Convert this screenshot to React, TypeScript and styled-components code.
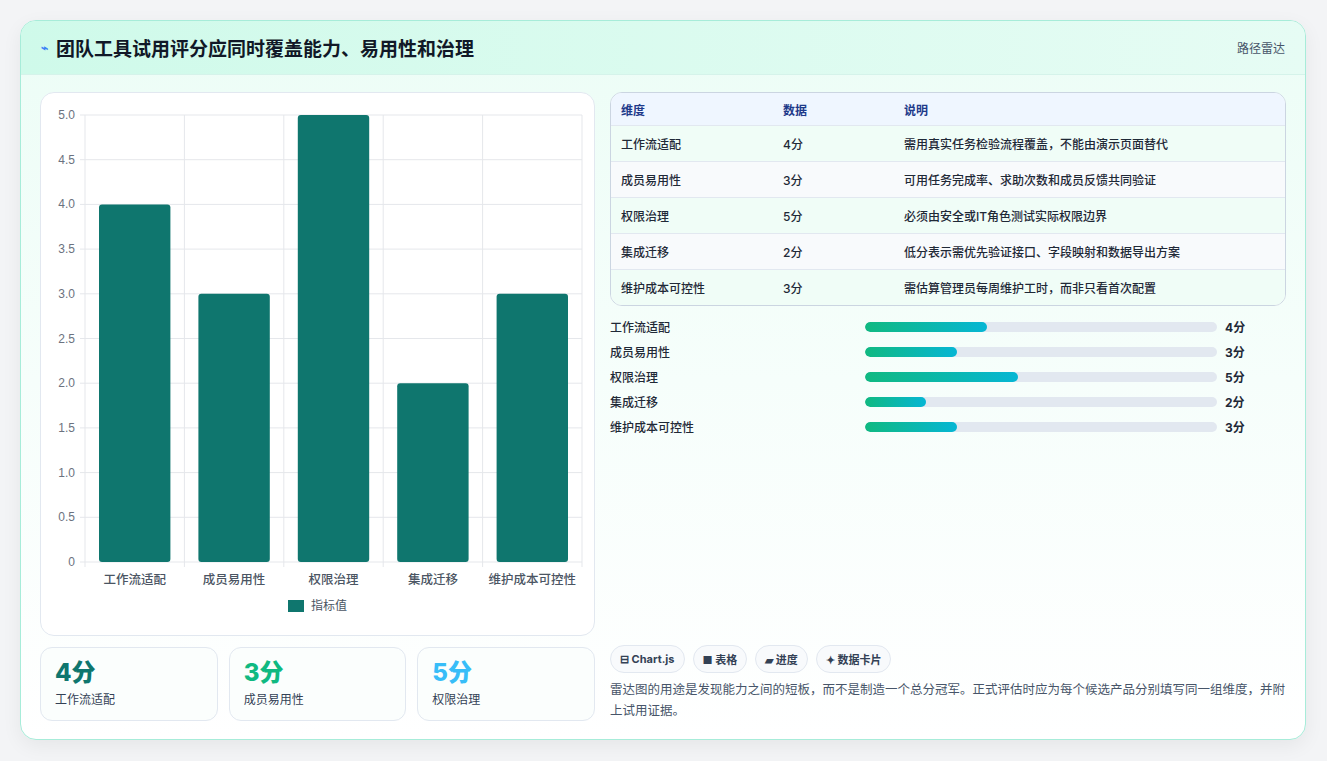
import React from "react";
import styled, { createGlobalStyle } from "styled-components";

const G = createGlobalStyle`
  body { margin:0; background:#f3f4f6; font-family: Inter, "Noto Sans CJK SC", sans-serif; }
`;
const Page = styled.div`padding:20px 21px 21px 20px; height:761px; box-sizing:border-box;`;
const Card = styled.div`
  height:720px; box-sizing:border-box; border:1px solid #a7ecd9; border-radius:16px; overflow:hidden;
  background:linear-gradient(180deg,#ecfdf6 0%,#f6fefb 50%,#ffffff 100%);
  box-shadow:0 6px 20px rgba(0,0,0,0.06); display:flex; flex-direction:column;
`;
const Header = styled.div`
  height:55px; box-sizing:border-box; display:flex; align-items:center; justify-content:space-between;
  padding:0 20px 0 20px; background:linear-gradient(90deg,#cffaea,#e6fcf4); border-bottom:1px solid #d5f3ea;
`;
const Title = styled.h1`margin:0; font-size:19px; font-weight:700; color:#111827; display:flex; align-items:center; gap:8px;`;
const Tag = styled.span`font-size:12px; color:#475569;`;
const Body = styled.div`flex:1; display:grid; grid-template-columns:555px 1fr; gap:15px; padding:17px 19px 18px 19px;`;
const Col = styled.div`display:flex; flex-direction:column; gap:11px; min-height:0;`;
const ChartBox = styled.div`height:544px; box-sizing:border-box; background:#fff; border:1px solid #e2e8f0; border-radius:14px;`;
const Stats = styled.div`display:grid; grid-template-columns:repeat(3,1fr); gap:11px;`;
const Stat = styled.div`height:74px; box-sizing:border-box; border:1px solid #e2e8f0; border-radius:12px; background:#fbfefd; padding:10px 14px;`;
const StatNum = styled.div<{ c: string }>`font-size:24px; font-weight:800; color:${p => p.c}; line-height:30px;`;
const StatLbl = styled.div`font-size:12px; color:#334155; margin-top:2px;`;
const Table = styled.div`border:1px solid #cbd5e1; border-radius:12px; overflow:hidden; background:#fff;`;
const Row = styled.div<{ head?: boolean; alt?: boolean }>`
  display:grid; grid-template-columns:162px 121px 1fr; align-items:center; padding:0 10px;
  height:${p => (p.head ? 32 : 35)}px; font-size:12px; color:${p => (p.head ? "#1e3a8a" : "#1f2937")};
  font-weight:${p => (p.head ? 700 : 500)};
  background:${p => (p.head ? "#eff6ff" : p.alt ? "#f8fafc" : "#f0fdf7")};
  border-top:${p => (p.head ? "none" : "1px solid #e2e8f0")};
`;
const Bars = styled.div`display:flex; flex-direction:column; gap:8px; margin-top:1px;`;
const BarRow = styled.div`display:grid; grid-template-columns:255px 352px 1fr; align-items:center; height:17px; font-size:12px; color:#1f2937; font-weight:500;`;
const Track = styled.div`height:10px; border-radius:5px; background:#e2e8f0; overflow:hidden;`;
const Fill = styled.div`height:100%; border-radius:5px; background:linear-gradient(90deg,#10b981,#06b6d4);`;
const Val = styled.span`padding-left:8px; font-weight:700;`;
const Spacer = styled.div`flex:1;`;
const Chips = styled.div`display:flex; gap:8px;`;
const Chip = styled.span`height:28px; box-sizing:border-box; padding:0 9px; border:1px solid #e2e8f0; border-radius:14px; background:#f8fafc; font-size:11px; font-weight:700; color:#334155; display:flex; align-items:center;`;
const Note = styled.p`margin:6px 0 0; font-size:12.5px; line-height:21px; color:#475569;`;

const data = [
  ["工作流适配", 4, "需用真实任务检验流程覆盖，不能由演示页面替代"],
  ["成员易用性", 3, "可用任务完成率、求助次数和成员反馈共同验证"],
  ["权限治理", 5, "必须由安全或IT角色测试实际权限边界"],
  ["集成迁移", 2, "低分表示需优先验证接口、字段映射和数据导出方案"],
  ["维护成本可控性", 3, "需估算管理员每周维护工时，而非只看首次配置"],
] as const;

function Chart() {
  const x0 = 44, x1 = 541, y0 = 22, y1 = 469;
  const h = y1 - y0, cw = (x1 - x0) / 5;
  const ticks = [0, 0.5, 1, 1.5, 2, 2.5, 3, 3.5, 4, 4.5, 5];
  return (
    <svg width="553" height="542" style={{ display: "block" }}>
      {ticks.map(t => {
        const y = y1 - (t / 5) * h;
        return (
          <g key={t}>
            <line x1={x0 - 5} x2={x1} y1={y} y2={y} stroke="#e5e7eb" />
            <text x={x0 - 10} y={y + 4} fontSize="12" fill="#6b7280" textAnchor="end" fontFamily="Liberation Sans, sans-serif">{t === 0 ? "0" : t.toFixed(1)}</text>
          </g>
        );
      })}
      {[0, 1, 2, 3, 4, 5].map(i => (
        <line key={i} x1={x0 + i * cw} x2={x0 + i * cw} y1={y0} y2={y1 + 5} stroke="#e5e7eb" />
      ))}
      {data.map(([n, v], i) => {
        const bh = (v / 5) * h;
        return (
          <g key={n}>
            <rect x={x0 + i * cw + 14} y={y1 - bh} width={cw - 28} height={bh} rx="3" fill="#0f766e" />
            <text x={x0 + i * cw + cw / 2} y={y1 + 22} fontSize="12.5" fill="#4b5563" textAnchor="middle" fontWeight="500">{n}</text>
          </g>
        );
      })}
      <rect x="247" y="507" width="16" height="12" fill="#0f766e" />
      <text x="270" y="517" fontSize="12" fill="#4b5563">指标值</text>
    </svg>
  );
}

export default function App() {
  return (
    <Page>
      <G />
      <Card>
        <Header>
          <Title><span style={{ color: "#3b82f6", fontSize: 12 }}>⌁</span>团队工具试用评分应同时覆盖能力、易用性和治理</Title>
          <Tag>路径雷达</Tag>
        </Header>
        <Body>
          <Col>
            <ChartBox><Chart /></ChartBox>
            <Stats>
              <Stat><StatNum c="#0f766e">4分</StatNum><StatLbl>工作流适配</StatLbl></Stat>
              <Stat><StatNum c="#10b981">3分</StatNum><StatLbl>成员易用性</StatLbl></Stat>
              <Stat><StatNum c="#38bdf8">5分</StatNum><StatLbl>权限治理</StatLbl></Stat>
            </Stats>
          </Col>
          <Col>
            <Table>
              <Row head><span>维度</span><span>数据</span><span>说明</span></Row>
              {data.map(([n, v, d], i) => (
                <Row key={n} alt={i % 2 === 1}><span>{n}</span><span>{v}分</span><span>{d}</span></Row>
              ))}
            </Table>
            <Bars>
              {data.map(([n, v]) => (
                <BarRow key={n}>
                  <span>{n}</span>
                  <Track><Fill style={{ width: `${v * 8.7}%` }} /></Track>
                  <Val>{v}分</Val>
                </BarRow>
              ))}
            </Bars>
            <Spacer />
            <div>
              <Chips>
                <Chip>⊟ Chart.js</Chip><Chip>■ 表格</Chip><Chip>▰ 进度</Chip><Chip>✦ 数据卡片</Chip>
              </Chips>
              <Note>雷达图的用途是发现能力之间的短板，而不是制造一个总分冠军。正式评估时应为每个候选产品分别填写同一组维度，并附上试用证据。</Note>
            </div>
          </Col>
        </Body>
      </Card>
    </Page>
  );
}
